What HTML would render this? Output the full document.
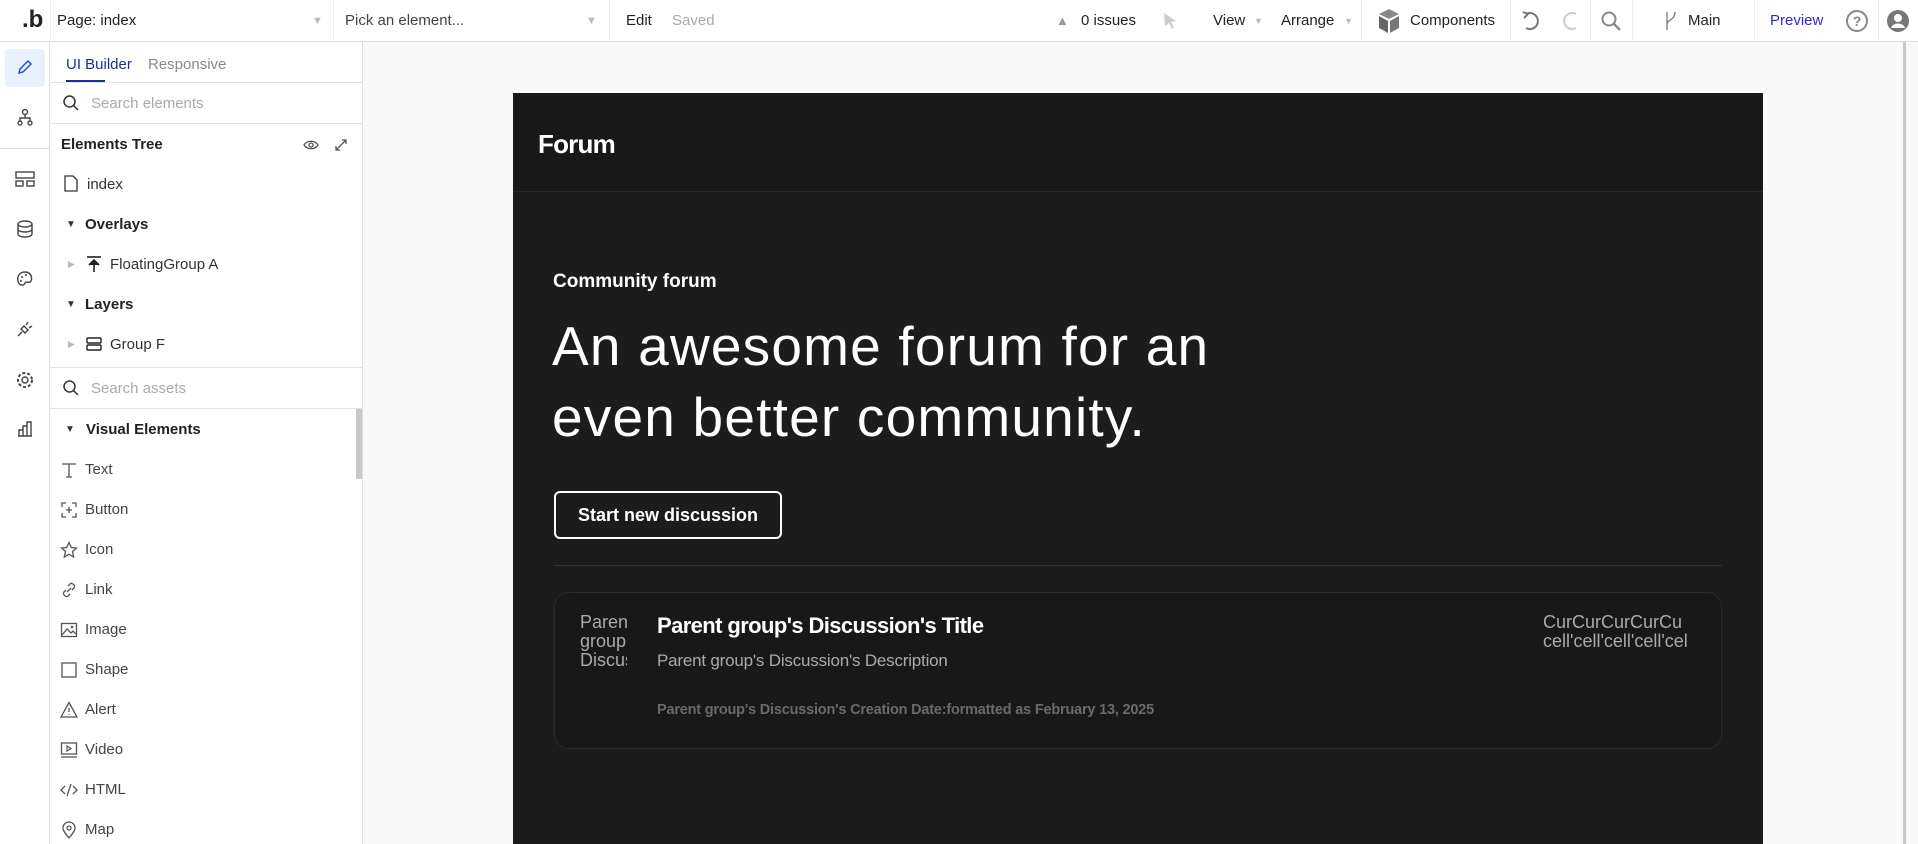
<!DOCTYPE html>
<html><head><meta charset="utf-8"><style>
*{box-sizing:border-box;margin:0;padding:0}
body{width:1918px;height:844px;overflow:hidden;background:#f9f9f9;font-family:"Liberation Sans",sans-serif;position:relative;color:#222}
.a{position:absolute}
.top{left:0;top:0;width:1918px;height:42px;background:#fff;border-bottom:1px solid #ddd}
.vs{position:absolute;top:0;width:1px;height:42px;background:#eee}
.tt{position:absolute;top:12px;font-size:15px;color:#222;white-space:nowrap}
.rail{left:0;top:42px;width:50px;height:802px;background:#fff;border-right:1px solid #ddd}
.panel{left:50px;top:42px;width:313px;height:802px;background:#fff;border-right:1px solid #ddd}
.hl{position:absolute;left:0;width:312px;height:1px;background:#e3e3e3}
.pt{position:absolute;font-size:15px;color:#333;white-space:nowrap}
.ic{position:absolute}
.ve{position:absolute;left:35px;font-size:15px;color:#444}
.vi{position:absolute;left:10px;width:18px;height:18px}
</style></head><body>
<div class="a top">
  <div class="tt" style="left:22px;top:6px;font-size:24px;font-weight:bold">.b</div>
  <div class="vs" style="left:50px"></div>
  <div class="tt" style="left:57px">Page: index</div>
  <div class="tt" style="left:312px;color:#bbb;font-size:11px;top:15px">▼</div>
  <div class="vs" style="left:333px"></div>
  <div class="tt" style="left:345px;color:#444">Pick an element...</div>
  <div class="tt" style="left:586px;color:#bbb;font-size:11px;top:15px">▼</div>
  <div class="vs" style="left:609px"></div>
  <div class="tt" style="left:626px">Edit</div>
  <div class="tt" style="left:672px;color:#aaa">Saved</div>
  <div class="tt" style="left:1056px;color:#999;font-size:13px;top:13px">▲</div>
  <div class="tt" style="left:1081px">0 issues</div>
  <svg class="ic" style="left:1162px;top:12px" width="16" height="18"><path d="M2 1 L14 9 L9 10 L12 16 L10 17 L7 11 L3 14 Z" fill="#ccc"/></svg>
  <div class="tt" style="left:1213px">View</div>
  <div class="tt" style="left:1254px;color:#bbb;font-size:9px;top:16px">▼</div>
  <div class="tt" style="left:1281px">Arrange</div>
  <div class="tt" style="left:1344px;color:#bbb;font-size:9px;top:16px">▼</div>
  <div class="vs" style="left:1361px"></div>
  <svg class="ic" style="left:1378px;top:8px" width="22" height="26"><path d="M11 1 L21 6 L11 11 L1 6Z" fill="#888"/><path d="M1 8 L10 13 L10 25 L1 20Z" fill="#666"/><path d="M21 8 L12 13 L12 25 L21 20Z" fill="#777"/></svg>
  <div class="tt" style="left:1410px">Components</div>
  <div class="vs" style="left:1510px"></div>
  <svg class="ic" style="left:1520px;top:10px" width="20" height="22"><path d="M6 4 A8 8 0 1 1 6 18" fill="none" stroke="#777" stroke-width="2"/><path d="M3 2 L8 4 L4 8" fill="none" stroke="#777" stroke-width="2"/></svg>
  <svg class="ic" style="left:1562px;top:10px" width="20" height="22"><path d="M14 4 A8 8 0 1 0 14 18" fill="none" stroke="#ccc" stroke-width="2"/></svg>
  <div class="vs" style="left:1590px"></div>
  <svg class="ic" style="left:1600px;top:10px" width="22" height="22"><circle cx="9" cy="9" r="6.5" fill="none" stroke="#888" stroke-width="2"/><path d="M14 14 L20 20" stroke="#888" stroke-width="2.5"/></svg>
  <div class="vs" style="left:1632px"></div>
  <svg class="ic" style="left:1664px;top:10px" width="14" height="22"><path d="M3 2 V20 M11 2 C11 10 3 10 3 14" fill="none" stroke="#888" stroke-width="1.5"/></svg>
  <div class="tt" style="left:1688px">Main</div>
  <div class="vs" style="left:1754px"></div>
  <div class="tt" style="left:1770px;color:#2a2ad6">Preview</div>
  <svg class="ic" style="left:1845px;top:9px" width="24" height="24"><circle cx="12" cy="12" r="10" fill="none" stroke="#888" stroke-width="2"/><text x="12" y="17" font-size="14" font-weight="bold" text-anchor="middle" fill="#888" font-family="Liberation Sans">?</text></svg>
  <div class="vs" style="left:1878px"></div>
  <svg class="ic" style="left:1886px;top:9px" width="24" height="24"><circle cx="12" cy="12" r="11" fill="#777"/><circle cx="12" cy="9" r="4" fill="#fff"/><path d="M5 19 C7 13 17 13 19 19" fill="#fff"/></svg>
</div>

<div class="a rail">
  <div class="a" style="left:5px;top:7px;width:40px;height:38px;background:#e9f1fd;border-radius:4px"></div>
  <svg class="ic" style="left:16px;top:16px" width="18" height="18"><path d="M3 15 L4 11 L12 3 L15 6 L7 14 Z" fill="none" stroke="#2a4cd0" stroke-width="1.5"/></svg>
  <svg class="ic" style="left:16px;top:66px" width="18" height="18"><circle cx="9" cy="4" r="2.5" fill="none" stroke="#444" stroke-width="1.4"/><path d="M9 7 V10 M4 13 V10 H14 V13" fill="none" stroke="#444" stroke-width="1.4"/><circle cx="4" cy="15" r="2" fill="none" stroke="#444" stroke-width="1.4"/><circle cx="14" cy="15" r="2" fill="none" stroke="#444" stroke-width="1.4"/></svg>
  <div class="a" style="left:0;top:106px;width:50px;height:1px;background:#ddd"></div>
  <svg class="ic" style="left:15px;top:128px" width="20" height="18"><rect x="1" y="2" width="18" height="6" fill="none" stroke="#444" stroke-width="1.4"/><rect x="1" y="11" width="7" height="5" fill="none" stroke="#444" stroke-width="1.4"/><rect x="12" y="11" width="7" height="5" fill="none" stroke="#444" stroke-width="1.4"/></svg>
  <svg class="ic" style="left:16px;top:178px" width="18" height="18"><ellipse cx="9" cy="4" rx="7" ry="3" fill="none" stroke="#444" stroke-width="1.4"/><path d="M2 4 V14 C2 18 16 18 16 14 V4 M2 9 C2 13 16 13 16 9" fill="none" stroke="#444" stroke-width="1.4"/></svg>
  <svg class="ic" style="left:16px;top:228px" width="18" height="18"><path d="M9 2 C3 2 1 7 2 11 C3 16 8 16 9 13 C10 11 12 13 14 12 C17 10 16 2 9 2Z" fill="none" stroke="#444" stroke-width="1.4"/><circle cx="6" cy="7" r="1" fill="#444"/><circle cx="10" cy="5" r="1" fill="#444"/><circle cx="5" cy="11" r="1" fill="#444"/></svg>
  <svg class="ic" style="left:16px;top:278px" width="18" height="18"><path d="M2 16 L6 12 M8 6 L12 10 L9 13 L5 9Z M12 2 L10 5 M16 6 L13 8" fill="none" stroke="#444" stroke-width="1.4"/></svg>
  <svg class="ic" style="left:15px;top:328px" width="20" height="20"><circle cx="10" cy="10" r="3" fill="none" stroke="#444" stroke-width="1.4"/><circle cx="10" cy="10" r="7" fill="none" stroke="#444" stroke-width="2" stroke-dasharray="3 2"/></svg>
  <svg class="ic" style="left:16px;top:378px" width="18" height="18"><path d="M2 16 H16 M3 16 V10 H7 V16 M7 16 V6 H11 V16 M11 16 V2 H15 V16" fill="none" stroke="#444" stroke-width="1.4"/></svg>
</div>

<div class="a panel">
  <div class="pt" style="left:16px;top:14px;color:#1a2f9a">UI Builder</div>
  <div class="a" style="left:16px;top:38px;width:39px;height:2px;background:#1a2f9a"></div>
  <div class="pt" style="left:98px;top:14px;color:#888">Responsive</div>
  <div class="hl" style="top:40px"></div>
  <svg class="ic" style="left:12px;top:52px" width="18" height="18"><circle cx="7.5" cy="7.5" r="5.5" fill="none" stroke="#333" stroke-width="1.5"/><path d="M11.5 11.5 L16 16" stroke="#333" stroke-width="1.5"/></svg>
  <div class="pt" style="left:41px;top:53px;color:#aaa">Search elements</div>
  <div class="hl" style="top:81px"></div>
  <div class="pt" style="left:11px;top:94px;font-weight:bold;color:#222">Elements Tree</div>
  <svg class="ic" style="left:253px;top:97px" width="16" height="12"><path d="M1 6 C4 1 12 1 15 6 C12 11 4 11 1 6Z" fill="none" stroke="#555" stroke-width="1.3"/><circle cx="8" cy="6" r="2" fill="none" stroke="#555" stroke-width="1.3"/></svg>
  <svg class="ic" style="left:284px;top:96px" width="14" height="14"><path d="M2 12 L12 2 M8 2 H12 V6 M2 8 V12 H6" fill="none" stroke="#555" stroke-width="1.3"/></svg>
  <svg class="ic" style="left:14px;top:133px" width="14" height="17"><path d="M1 1 H9 L13 5 V16 H1Z" fill="none" stroke="#333" stroke-width="1.3"/></svg>
  <div class="pt" style="left:37px;top:134px">index</div>
  <div class="pt" style="left:16px;top:177px;font-size:10px">▼</div>
  <div class="pt" style="left:35px;top:174px;font-weight:bold;color:#222">Overlays</div>
  <div class="pt" style="left:18px;top:217px;font-size:9px;color:#bbb">▶</div>
  <svg class="ic" style="left:36px;top:214px" width="16" height="16"><path d="M1 1 H15" stroke="#222" stroke-width="1.6"/><path d="M8 16 V5 M3 9 L8 4 L13 9" fill="#222" stroke="#222" stroke-width="1.6"/></svg>
  <div class="pt" style="left:60px;top:214px">FloatingGroup A</div>
  <div class="pt" style="left:16px;top:257px;font-size:10px">▼</div>
  <div class="pt" style="left:35px;top:254px;font-weight:bold;color:#222">Layers</div>
  <div class="pt" style="left:18px;top:297px;font-size:9px;color:#bbb">▶</div>
  <svg class="ic" style="left:36px;top:294px" width="16" height="16"><rect x="1" y="2" width="14" height="5" rx="1" fill="none" stroke="#222" stroke-width="1.4"/><rect x="1" y="9" width="14" height="5" rx="1" fill="none" stroke="#222" stroke-width="1.4"/></svg>
  <div class="pt" style="left:60px;top:294px">Group F</div>
  <div class="hl" style="top:325px"></div>
  <svg class="ic" style="left:12px;top:337px" width="18" height="18"><circle cx="7.5" cy="7.5" r="5.5" fill="none" stroke="#333" stroke-width="1.5"/><path d="M11.5 11.5 L16 16" stroke="#333" stroke-width="1.5"/></svg>
  <div class="pt" style="left:41px;top:338px;color:#aaa">Search assets</div>
  <div class="hl" style="top:366px"></div>
  <div class="a" style="left:306px;top:367px;width:6px;height:70px;background:#c8c8c8"></div>
  <div class="pt" style="left:15px;top:382px;font-size:10px">▼</div>
  <div class="pt" style="left:36px;top:379px;font-weight:bold;color:#222">Visual Elements</div>

  <svg class="vi" style="top:419px"><path d="M2 3 H16 M9 3 V16 M6 16 H12" fill="none" stroke="#555" stroke-width="1.3"/></svg>
  <div class="ve" style="top:419px">Text</div>
  <svg class="vi" style="top:459px"><path d="M2 6 V2 H6 M12 2 H16 V6 M16 12 V16 H12 M6 16 H2 V12 M9 6 V12 M6 9 H12" fill="none" stroke="#555" stroke-width="1.3"/></svg>
  <div class="ve" style="top:459px">Button</div>
  <svg class="vi" style="top:499px"><path d="M9 1.5 L11.3 6.5 L16.5 7 L12.5 10.5 L13.7 16 L9 13.2 L4.3 16 L5.5 10.5 L1.5 7 L6.7 6.5Z" fill="none" stroke="#555" stroke-width="1.3"/></svg>
  <div class="ve" style="top:499px">Icon</div>
  <svg class="vi" style="top:539px"><path d="M7 11 L11 7 M8 5 L10 3 C12 1 16 5 14 7 L12 9 M10 13 L8 15 C6 17 2 13 4 11 L6 9" fill="none" stroke="#555" stroke-width="1.3"/></svg>
  <div class="ve" style="top:539px">Link</div>
  <svg class="vi" style="top:579px"><rect x="1.5" y="2.5" width="15" height="13" fill="none" stroke="#555" stroke-width="1.3"/><path d="M2 14 L7 8 L11 12 L13 10 L16 13" fill="none" stroke="#555" stroke-width="1.3"/><circle cx="12" cy="6" r="1.3" fill="#555"/></svg>
  <div class="ve" style="top:579px">Image</div>
  <svg class="vi" style="top:619px"><rect x="2" y="2" width="14" height="14" fill="none" stroke="#555" stroke-width="1.3"/></svg>
  <div class="ve" style="top:619px">Shape</div>
  <svg class="vi" style="top:659px"><path d="M9 1.5 L17 16 H1Z M9 7 V11 M9 13 V14" fill="none" stroke="#555" stroke-width="1.3"/></svg>
  <div class="ve" style="top:659px">Alert</div>
  <svg class="vi" style="top:699px"><rect x="1.5" y="2" width="15" height="11" fill="none" stroke="#555" stroke-width="1.3"/><path d="M7 5 L11 7.5 L7 10Z" fill="none" stroke="#555" stroke-width="1.2"/><path d="M1 16 H17" stroke="#555" stroke-width="1.3"/></svg>
  <div class="ve" style="top:699px">Video</div>
  <svg class="vi" style="top:739px"><path d="M5 5 L1 9 L5 13 M13 5 L17 9 L13 13 M11 3 L7 15" fill="none" stroke="#555" stroke-width="1.3"/></svg>
  <div class="ve" style="top:739px">HTML</div>
  <svg class="vi" style="top:779px"><path d="M9 17 C4 11 3 9 3 7 A6 6 0 0 1 15 7 C15 9 14 11 9 17Z" fill="none" stroke="#555" stroke-width="1.3"/><circle cx="9" cy="7" r="2" fill="none" stroke="#555" stroke-width="1.3"/></svg>
  <div class="ve" style="top:779px">Map</div>
</div>

<div class="a" style="left:1903px;top:42px;width:15px;height:802px;background:#f9f9f9;border-left:3px solid #c8c8c8"></div>

<div class="a" style="left:513px;top:93px;width:1250px;height:751px;background:#1c1c1c">
  <div class="a" style="left:0;top:0;width:1250px;height:99px;background:#181818;border-bottom:1px solid #262626"></div>
  <div class="a" style="left:25px;top:36px;font-size:26px;font-weight:bold;color:#fff;letter-spacing:-0.8px">Forum</div>
  <div class="a" style="left:40px;top:178px;font-size:19px;font-weight:bold;color:#fff">Community forum</div>
  <div class="a" style="left:39px;top:218px;font-size:55px;line-height:71px;color:#fff;white-space:nowrap;letter-spacing:1.2px">An awesome forum for an<br>even better community.</div>
  <div class="a" style="left:41px;top:398px;width:228px;height:48px;border:2px solid #fff;border-radius:6px;color:#fff;font-weight:bold;font-size:18px;text-align:center;line-height:44px">Start new discussion</div>
  <div class="a" style="left:41px;top:472px;width:1168px;height:1px;background:#333"></div>
  <div class="a" style="left:41px;top:499px;width:1168px;height:157px;background:#181818;border:1px solid #2a2a2a;border-radius:15px">
    <div class="a" style="left:25px;top:20px;width:47px;height:60px;overflow:hidden;color:#aaa;font-size:18px;line-height:19px">Parent group's Discuss</div>
    <div class="a" style="left:102px;top:20px;font-size:22px;font-weight:bold;color:#fff;letter-spacing:-0.6px">Parent group's Discussion's Title</div>
    <div class="a" style="left:102px;top:58px;font-size:17px;color:#aaa;letter-spacing:-0.2px">Parent group's Discussion's Description</div>
    <div class="a" style="left:102px;top:109px;font-size:14.5px;font-weight:bold;color:#6a6a6a;letter-spacing:-0.2px">Parent group's Discussion's Creation Date:formatted as February 13, 2025</div>
    <div class="a" style="left:988px;top:20px;width:160px;overflow:hidden;color:#aaa;font-size:18px;line-height:19px;white-space:nowrap">CurCurCurCurCu<br>cell'cell'cell'cell'cel</div>
  </div>
</div>
</body></html>
